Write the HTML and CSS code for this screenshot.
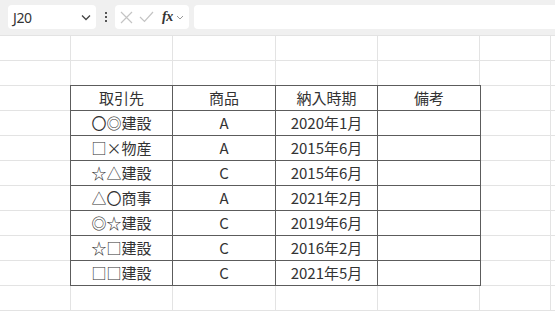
FILE: index.html
```html
<!DOCTYPE html>
<html lang="ja">
<head>
<meta charset="utf-8">
<link rel="stylesheet" href="styles.css">
</head>
<body>
<div class="toolbar">
  <div class="namebox">
    <span class="ref">J20</span>
    <svg class="chev" width="10" height="7" viewBox="0 0 10 7"><path d="M1 1.5 L5 5.5 L9 1.5" fill="none" stroke="#444" stroke-width="1.3"/></svg>
  </div>
  <div class="dots"><i></i><i></i><i></i></div>
  <div class="fxbox">
    <svg width="13" height="13" viewBox="0 0 13 13"><path d="M1 1 L12 12 M12 1 L1 12" stroke="#c4c4c4" stroke-width="1.2" fill="none"/></svg>
    <svg width="15" height="12" viewBox="0 0 15 12"><path d="M1 6 L5.5 10.5 L14 1" stroke="#c4c4c4" stroke-width="1.2" fill="none"/></svg>
    <span class="fx">fx</span>
    <svg class="chev2" width="8" height="5" viewBox="0 0 8 5"><path d="M1 1 L4 4 L7 1" fill="none" stroke="#999" stroke-width="1"/></svg>
  </div>
  <div class="formula"></div>
</div>
<div class="sheet">
  <table class="data">
    <colgroup><col class="c1"><col class="c2"><col class="c3"><col class="c4"></colgroup>
    <tr><td>取引先</td><td>商品</td><td>納入時期</td><td>備考</td></tr>
    <tr><td>〇◎建設</td><td>A</td><td>2020年1月</td><td></td></tr>
    <tr><td>□×物産</td><td>A</td><td>2015年6月</td><td></td></tr>
    <tr><td>☆△建設</td><td>C</td><td>2015年6月</td><td></td></tr>
    <tr><td>△〇商事</td><td>A</td><td>2021年2月</td><td></td></tr>
    <tr><td>◎☆建設</td><td>C</td><td>2019年6月</td><td></td></tr>
    <tr><td>☆□建設</td><td>C</td><td>2016年2月</td><td></td></tr>
    <tr><td>□□建設</td><td>C</td><td>2021年5月</td><td></td></tr>
  </table>
</div>
</body>
</html>
```
FILE: styles.css
```css
html, body {
  margin: 0;
  padding: 0;
  background: #fff;
  width: 555px;
  height: 311px;
  overflow: hidden;
  font-family: "Noto Sans CJK JP", "Noto Sans", sans-serif;
}
.toolbar {
  height: 35px;
  box-sizing: border-box;
  background: #f0f0f0;
  display: flex;
  align-items: flex-start;
  padding: 5px 0 0 8px;
}
.namebox {
  width: 88px;
  height: 24px;
  box-sizing: border-box;
  background: #fff;
  border-radius: 4px;
  display: flex;
  align-items: center;
  justify-content: space-between;
  padding: 0 5px 0 5px;
}
.ref {
  font-family: "Noto Sans", "Liberation Sans", sans-serif;
  font-size: 14px;
  color: #333;
  letter-spacing: -0.4px;
}
.chev { margin-top: 1px; }
.dots {
  width: 19px;
  height: 24px;
  display: flex;
  flex-direction: column;
  align-items: center;
  justify-content: center;
  gap: 2px;
}
.dots i {
  display: block;
  width: 2px;
  height: 2px;
  background: #555;
}
.fxbox {
  width: 74px;
  height: 24px;
  box-sizing: border-box;
  background: #fff;
  border-radius: 4px;
  display: flex;
  align-items: center;
  padding: 0 0 0 5px;
  gap: 6px;
}
.fx {
  font-family: "Liberation Serif", "DejaVu Serif", serif;
  font-style: italic;
  font-weight: bold;
  font-size: 14px;
  color: #333;
  margin-left: 2px;
  margin-right: -3px;
  letter-spacing: -0.5px;
}
.chev2 { margin-top: 1px; }
.formula {
  flex: 1;
  height: 24px;
  margin-left: 5px;
  background: #fff;
  border-radius: 4px 0 0 4px;
}
.sheet {
  height: 276px;
  background-image:
    repeating-linear-gradient(to bottom, #e3e3e3 0 1px, transparent 1px 25px),
    linear-gradient(to right,
      transparent 0 70px, #e3e3e3 70px 71px,
      transparent 71px 172px, #e3e3e3 172px 173px,
      transparent 173px 275px, #e3e3e3 275px 276px,
      transparent 276px 377px, #e3e3e3 377px 378px,
      transparent 378px 479px, #e3e3e3 479px 480px,
      transparent 480px 550px, #e3e3e3 550px 551px,
      transparent 551px);
  padding-top: 50px;
  padding-left: 70px;
  box-sizing: border-box;
}
.data {
  border-collapse: collapse;
  table-layout: fixed;
  width: 410px;
  background: #fff;
}
.c1 { width: 102px; }
.c2 { width: 103px; }
.c3 { width: 102px; }
.c4 { width: 103px; }
.data tr { height: 25px; }
.data td {
  border: 1px solid #5c5c5c;
  height: 25px;
  padding: 0;
  box-sizing: border-box;
  text-align: center;
  vertical-align: middle;
  font-size: 15px;
  line-height: 22px;
  color: #333;
}
```
